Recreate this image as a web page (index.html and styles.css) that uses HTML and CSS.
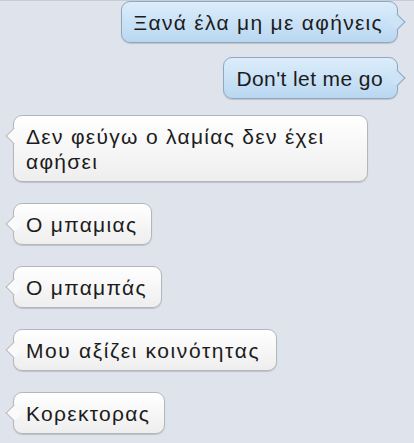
FILE: index.html
```html
<!DOCTYPE html>
<html lang="el">
<head>
    <meta charset="UTF-8">
    <meta name="viewport" content="width=device-width, initial-scale=1.0">
    <title>Messages</title>
    <link rel="stylesheet" href="styles.css">
</head>
<body>
    <div class="thread">
        <div class="msg sent first greek">Ξανά έλα μη με αφήνεις</div>
        <div class="msg sent">Don't let me go</div>
        <div class="msg received two-line greek">Δεν φεύγω ο λαμίας δεν έχει αφήσει</div>
        <div class="msg received gap greek">Ο μπαμιας</div>
        <div class="msg received gap greek">Ο μπαμπάς</div>
        <div class="msg received gap greek wide">Μου αξίζει κοινότητας</div>
        <div class="msg received gap greek">Κορεκτορας</div>
    </div>
</body>
</html>
```

FILE: styles.css
```css
body {
    margin: 0;
    background: #dfe3eb;
    font-family: 'Liberation Sans', Arial, sans-serif;
    color: #1c1c1c;
}

.thread {
    display: flex;
    flex-direction: column;
    padding: 0 16px 0 13px;
    height: 443px;
    box-sizing: border-box;
    border-top: 1px solid #c8ccd3;
}

.msg {
    position: relative;
    font-size: 21px;
    line-height: 25px;
    letter-spacing: 0.4px;
    padding: 7.5px 14px 7.5px 12px;
    border-radius: 9px;
    box-shadow: 0 1px 1px rgba(0, 0, 0, 0.15);
}

.greek {
    letter-spacing: 1.3px;
}

.greek.wide {
    letter-spacing: 1.6px;
    padding-right: 16px;
}

.msg::before {
    content: '';
    position: absolute;
    top: 14px;
    width: 11px;
    height: 11px;
    transform: rotate(45deg);
}

.sent {
    align-self: flex-end;
    background: linear-gradient(#dcedfb, #b9d7f1);
    border: 1px solid #8fa8c0;
    margin-top: 14px;
}

.sent.first {
    margin-top: 0;
}

.sent::before {
    right: -6px;
    background: #cde3f6;
    border-top: 1px solid #8fa8c0;
    border-right: 1px solid #8fa8c0;
}

.received {
    align-self: flex-start;
    background: linear-gradient(#ffffff, #eeeeee);
    border: 1px solid #b3b7bd;
    margin-top: 16px;
}

.received::before {
    left: -6px;
    background: #fafafa;
    border-left: 1px solid #b3b7bd;
    border-bottom: 1px solid #b3b7bd;
}

.two-line {
    width: 355px;
    box-sizing: border-box;
}

.received.gap {
    margin-top: 21px;
}
```
